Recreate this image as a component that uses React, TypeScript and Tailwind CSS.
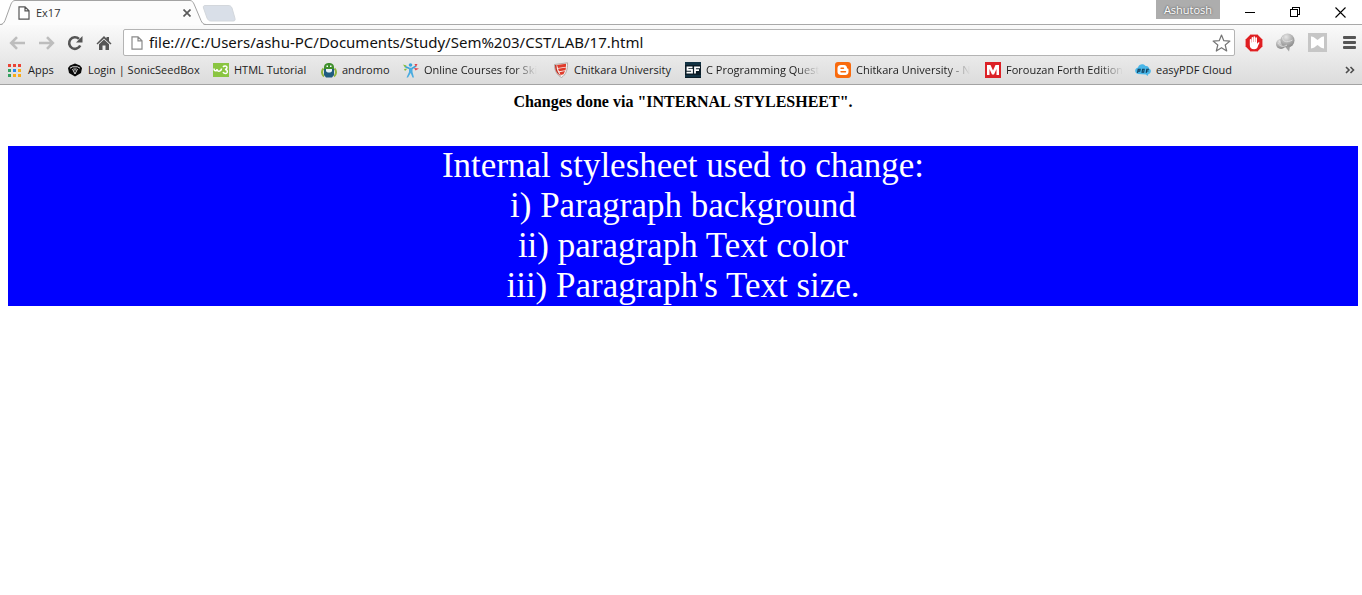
import type { ReactNode } from "react";

type Bookmark = { label: string; width: string; icon: ReactNode; faded?: boolean };

const AppsIcon = () => (
  <svg className="mr-[2px]" width="13" height="13" viewBox="0 0 13 13" shapeRendering="crispEdges">
    <path fill="#ea4335" d="M0 0h3v3H0zM5 0h3v3H5zM10 0h3v3h-3z" />
    <path fill="#34a060" d="M0 5h3v3H0zM0 10h3v3H0z" />
    <path fill="#2a86ee" d="M5 5h3v3H5z" />
    <path fill="#f9ab1a" d="M10 5h3v3h-3zM5 10h3v3H5zM10 10h3v3h-3z" />
  </svg>
);

const SonicIcon = () => (
  <svg width="16" height="16" viewBox="0 0 16 16">
    <path fill="#0a0a0a" d="M8 1.500l5 2L15 6l-1 5-6 3.500L2 11 1 6l2-2.500z" />
    <path fill="none" stroke="#dedede" strokeWidth="1" d="M3 6.200l2.500-1.400h5L13 6.200M5.500 7l2.500 5 2.500-5" />
    <path fill="#8a8a8a" d="M6 6.200h4L8 9.500z" />
  </svg>
);

const W3Icon = () => (
  <svg width="16" height="16" viewBox="0 0 16 16">
    <path fill="#8ac541" d="M0 1h16v14H0z" />
    <path fill="none" stroke="#fff" strokeWidth="1.500" d="M1 6.500c0 3 3 3 3 .5 0 3 4 3 4.500-.5M10 5c1-1.500 4-1.500 4 .5 0 1.500-2 2-2 2 3 0 3 4 .5 4-1.500 0-2-.5-2.500-1.500" />
  </svg>
);

const AndromoIcon = () => (
  <svg width="16" height="16" viewBox="0 0 16 16">
    <path fill="#3f8f2c" d="M3 5C3-.5 13-.5 13 5v2H3z" />
    <path fill="#fff" d="M5.500 3.500h1.500v1.500H5.500zM9 3.500h1.500v1.500H9z" />
    <path fill="none" stroke="#8fb53d" strokeWidth="2" d="M2.500 6.500C0 9 1 13 3 14.500M13.500 6.500c2.500 2.500 1.500 6.500-.5 8" />
    <path fill="#1f5c80" d="M3 7h10v6l-2 2.500H5L3 13z" />
    <path fill="#e8f1f5" d="M5 7h6v2c-1 2-5 2-6 0z" />
  </svg>
);

const CoursesIcon = () => (
  <svg width="16" height="16" viewBox="0 0 16 16">
    <circle cx="7.500" cy="3" r="1.800" fill="#3aa4dc" />
    <path stroke="#36a2da" strokeWidth="1.500" fill="none" d="M2 4.500l4.500 2h2.500L13 4" />
    <path fill="#4bace0" d="M6 6h3.500v4l1.500 5.500H9.500L7.700 11 5 15.500H3.500L6 10z" />
    <path fill="#84bd3f" d="M0 2.500l3.500 1-1.500 2zM1 7l3.500-.5L2 9z" />
    <path fill="#e2484d" d="M11.500 2l3 0-1.500 3zM11 6l5 .5-3.500 2z" />
  </svg>
);

const ShieldIcon = () => (
  <svg width="16" height="16" viewBox="0 0 16 16">
    <path fill="#f5efec" stroke="#a59b98" strokeWidth=".8" d="M1.500 2.500L14.500.8C15 8 12.500 13 8.500 15.500 4 13 1.500 9 1.500 2.500z" />
    <path fill="#df3b2b" d="M4 3l9-1.300v3L5 6zM5 6.800l8-1.300-.5 2.800L6 9.300zM6.500 10.200l5.500-1.200-1.500 3.200-3 .8z" />
    <path fill="#c42f22" d="M2 3h1.500c0 5 1.500 8 4.500 11C4 12 2 9 2 3z" />
  </svg>
);

const SFIcon = () => (
  <svg width="16" height="16" viewBox="0 0 16 16">
    <path fill="#0b1c27" d="M0 0h16v16H0z" />
    <path fill="#174157" d="M0 0h16v3H0zM0 13h16v2H0z" opacity=".6" />
    <path fill="none" stroke="#fff" strokeWidth="1.800" d="M7.500 5.400H2.500v2.500H7v2.700H1.500M10 11.500V5.400h5M10 8.200h4" />
  </svg>
);

const BloggerIcon = () => (
  <svg width="16" height="16" viewBox="0 0 16 16">
    <rect width="16" height="16" rx="3" fill="#f96a0d" />
    <path fill="#fff" d="M6 3h3c2 0 3 1.500 3 3 0 1 1.500 0 1.500 1.500V10c0 2-1.500 3-3 3H6c-2 0-3.500-1-3.500-3V6c0-2 1.500-3 3.500-3z" />
    <path stroke="#f96a0d" strokeWidth="1.400" strokeLinecap="round" d="M6 6.200h2.500M6 9.800h4.500" />
  </svg>
);

const MIcon = () => (
  <svg width="16" height="16" viewBox="0 0 16 16">
    <path fill="#dc2127" d="M0 0h16v16H0z" />
    <path fill="#fff" d="M2 13V3h3.500L8 8.500 10.500 3H14v10h-2.500V7L9 12.500H7L4.500 7v6z" />
  </svg>
);

const PdfIcon = () => (
  <svg width="16" height="16" viewBox="0 0 16 16">
    <path fill="#49b6e8" d="M3 12C-1 11-.5 6 3 5.500 4 1.500 9 1.500 10.500 4 13 3.500 14 5.500 14 6.500c3 1 2 5-.5 5.500l-1 2L11 12.500z" />
    <path fill="none" stroke="#123f5c" strokeWidth="1.100" d="M2.500 10.800l.7-3.500h2l-.4 1.800H3M7 10.300l.6-3h1.600l-.5 3zM11.200 10.800l.6-3.500H14M11.500 9h2" />
  </svg>
);

const bookmarks: Bookmark[] = [
  { label: "Apps", width: "w-[59px]", icon: <AppsIcon /> },
  { label: "Login | SonicSeedBox", width: "w-[146px]", icon: <SonicIcon /> },
  { label: "HTML Tutorial", width: "w-[108px]", icon: <W3Icon /> },
  { label: "andromo", width: "w-[82px]", icon: <AndromoIcon /> },
  { label: "Online Courses for Ski", width: "w-[150px]", icon: <CoursesIcon />, faded: true },
  { label: "Chitkara University", width: "w-[132px]", icon: <ShieldIcon /> },
  { label: "C Programming Quest", width: "w-[150px]", icon: <SFIcon />, faded: true },
  { label: "Chitkara University - N", width: "w-[150px]", icon: <BloggerIcon />, faded: true },
  { label: "Forouzan Forth Edition", width: "w-[150px]", icon: <MIcon />, faded: true },
  { label: "easyPDF Cloud", width: "w-[120px]", icon: <PdfIcon /> },
];

const PageIcon = ({ className }: { className: string }) => (
  <svg className={className} width="12" height="14" viewBox="0 0 12 14" fill="#fff" stroke="currentColor" strokeWidth="1.200">
    <path d="M1 .8h6l4 4v8.400H1zM7 .8v4h4" />
  </svg>
);

const Arrow = ({ className = "" }: { className?: string }) => (
  <svg className={className} width="16" height="14" viewBox="0 0 16 14" fill="none" stroke="#bdbdbd" strokeWidth="2.600">
    <path d="M8 1.200L2.200 7 8 12.800M2.500 7H16" />
  </svg>
);

const toolButton = "flex shrink-0 items-center justify-center";

function TabStrip() {
  return (
    <div className="flex h-[25px] items-start bg-white shadow-[inset_0_-1px_0_#a9a9a9]">
      <div className="relative flex h-[25px] w-[206px] shrink-0 items-center pl-[18px] pr-[14px]">
        <svg className="absolute inset-0" width="206" height="25" viewBox="0 0 206 25" fill="none">
          <path fill="#fcfcfc" d="M0 25c3 0 4-2 5-4L11 4c1-2 2-3.500 4-3.500h175c2 0 3 1.500 4 3.500l7 17c1 2 2 4 5 4z" />
          <path stroke="#a3a3a3" d="M0 24.500c3 0 4-2 5-4L11 4c1-2 2-3.500 4-3.500h175c2 0 3 1.500 4 3.500l7 16.500c1 2 2 4 5 4" />
        </svg>
        <PageIcon className="relative mr-[6px] text-[#555]" />
        <span className="relative flex-1 text-[11px] leading-4 text-[#333]">Ex17</span>
        <button aria-label="Close tab" className="relative flex size-[10px] items-center justify-center">
          <svg width="8" height="8" viewBox="0 0 8 8" stroke="#5a5a5a" strokeWidth="1.700">
            <path d="M.5.5l7 7M7.500.5l-7 7" />
          </svg>
        </button>
      </div>
      <button aria-label="New tab" className="-ml-1 mt-[5px]">
        <svg width="34" height="17" viewBox="0 0 34 17">
          <path fill="#d9dfe8" stroke="#d3d7dc" d="M3 .5h23c2 0 3 .5 4 2.500l3 10.500c.5 2-.5 2.500-2 2.500H9c-2 0-3-1-4-3L1.500 3C1 1.500 1.500.5 3 .5z" />
        </svg>
      </button>
      <div className="flex-1" />
      <button className="h-[19px] w-[64px] bg-[#adadad] text-[11px] leading-[18px] text-white [text-shadow:0_0_2px_#333]">
        Ashutosh
      </button>
      <div className="ml-[7px] flex h-[24px]">
        <button aria-label="Minimize" className="flex w-[46px] items-center justify-center">
          <svg width="10" height="10" viewBox="0 0 10 10" shapeRendering="crispEdges"><path d="M0 5h10v1H0z" /></svg>
        </button>
        <button aria-label="Restore" className="flex w-[44px] items-center justify-center">
          <svg width="10" height="10" viewBox="0 0 10 10" fill="none" stroke="#000" shapeRendering="crispEdges">
            <path d="M.5 2.500h7v7h-7zM2.500 2.500v-2h7v7h-2" />
          </svg>
        </button>
        <button aria-label="Close" className="flex w-[45px] items-center justify-center pl-[2px]">
          <svg width="11" height="11" viewBox="0 0 11 11" stroke="#000" strokeWidth="1.100"><path d="M.5.5l10 10M10.500.5l-10 10" /></svg>
        </button>
      </div>
    </div>
  );
}

function Toolbar() {
  return (
    <div className="flex h-[35px] items-center pl-[9px] pr-[5px]">
      <button aria-label="Back" className={toolButton + " w-4"}><Arrow /></button>
      <button aria-label="Forward" className={toolButton + " ml-[14px] w-4"}><Arrow className="rotate-180" /></button>
      <button aria-label="Reload" className={toolButton + " ml-[12px] w-4"}>
        <svg width="16" height="16" viewBox="0 0 16 16">
          <path fill="none" stroke="#555" strokeWidth="2.600" d="M13.200 10.500A5.800 5.800 0 1 1 12 3.900" />
          <path fill="#555" d="M15.500 1v6.500H9z" />
        </svg>
      </button>
      <button aria-label="Home" className={toolButton + " ml-[13px] w-4"}>
        <svg width="16" height="16" viewBox="0 0 16 16" fill="#555">
          <path d="M8 1l2.500 2.500V2H13v4l2.500 2.500-1 1L8 3.400 1.500 9.500l-1-1z" />
          <path d="M3 9.300L8 4.600l5 4.700V15H9.500v-4.500h-3V15H3z" />
        </svg>
      </button>
      <div className="ml-[11px] flex h-[27px] min-w-0 flex-1 items-center rounded-[2px] border border-[#b4b4b4] bg-white pl-[7px] pr-[3px]">
        <PageIcon className="shrink-0 text-[#8a8a8a]" />
        <input
          aria-label="Address"
          className="ml-[6px] min-w-0 flex-1 bg-transparent pb-[2px] font-['Noto_Sans',sans-serif] text-[15px] leading-5 text-[#111] outline-none"
          defaultValue="file:///C:/Users/ashu-PC/Documents/Study/Sem%203/CST/LAB/17.html"
        />
        <button aria-label="Bookmark this page">
          <svg width="19" height="18" viewBox="0 0 19 18" fill="#fff" stroke="#757575" strokeWidth="1.200" strokeLinejoin="round">
            <path d="M9.500 1l2.300 5.700 6.100.4-4.700 3.900 1.500 6-5.200-3.300L4.300 17l1.500-6L1.100 7.100l6.100-.4z" />
          </svg>
        </button>
      </div>
      <button aria-label="Ad blocker" className={toolButton + " ml-[9px] w-[19px]"}>
        <svg width="18" height="18" viewBox="0 0 18 18">
          <path fill="#df1f22" stroke="#eda0a0" strokeWidth=".8" d="M5.500.5h7l5 5v7l-5 5h-7l-5-5v-7z" />
          <path fill="#fff" d="M4.800 5.800c0-1.100 1.500-1.100 1.500 0V8.500h.3V3.900c0-1.100 1.600-1.100 1.600 0V8h.3V3c0-1.100 1.600-1.100 1.600 0v5h.3V4c0-1.100 1.600-1.100 1.600 0v6c.8-1.500 1.300-2.200 2.200-1.700.8.500-.7 2-1.200 3.700-.6 2.200-1.700 3.200-3.900 3.200-2.700 0-4.300-1.200-4.300-4.200z" />
        </svg>
      </button>
      <button aria-label="Download manager" className={toolButton + " ml-[12px] w-[20px]"}>
        <svg width="20" height="19" viewBox="0 0 20 19">
          <defs>
            <radialGradient id="ball" cx=".4" cy=".25" r=".8">
              <stop stopColor="#e6e6e6" /><stop offset="1" stopColor="#858585" />
            </radialGradient>
          </defs>
          <circle cx="6" cy="11" r="5" fill="url(#ball)" />
          <circle cx="12.500" cy="7.500" r="7" fill="url(#ball)" />
          <path fill="#a2a2a2" d="M10 13.500l4 5 1-5z" />
          <path fill="none" stroke="#dcdcdc" strokeWidth="1" d="M7.500 4c0 5 4 6 10 3M3 10c2 4 6 4 9 2" />
        </svg>
      </button>
      <button aria-label="Mail extension" className={toolButton + " ml-[13px] w-[19px]"}>
        <svg width="19" height="19" viewBox="0 0 19 19">
          <path fill="#c6c6c6" d="M0 0h19v19H0z" />
          <path fill="#fff" d="M3 3.500c3-.5 4.500 2.500 6.500 3.500C11.500 6 13 3 16 3.500v12c-3 0-4.500-2.500-6.500-3.500-2 1-3.500 3.500-6.500 3.500z" />
        </svg>
      </button>
      <button aria-label="Menu" className={toolButton + " ml-[15px] w-[15px]"}>
        <svg width="13" height="13" viewBox="0 0 13 13" fill="#555">
          <rect width="13" height="3" rx="1" /><rect y="5" width="13" height="3" rx="1" /><rect y="10" width="13" height="3" rx="1" />
        </svg>
      </button>
    </div>
  );
}

function BookmarksBar() {
  return (
    <nav aria-label="Bookmarks" className="flex h-[24px] items-start pl-2 pr-[7px] pt-[2px]">
      {bookmarks.map(({ label, width, icon, faded }) => (
        <a key={label} href="#" className={"flex h-4 shrink-0 items-center text-[11px] leading-4 text-[#1c1c1c] " + width}>
          <span className="mr-[5px] shrink-0">{icon}</span>
          <span
            className={
              faded
                ? "whitespace-nowrap [mask-image:linear-gradient(to_right,#000_80%,transparent)]"
                : "whitespace-nowrap"
            }
          >
            {label}
          </span>
        </a>
      ))}
      <button aria-label="More bookmarks" className="ml-auto flex h-4 items-center">
        <svg width="10" height="8" viewBox="0 0 10 8" fill="none" stroke="#4c4c4c" strokeWidth="1.600">
          <path d="M1 1l3 3-3 3M5.500 1l3 3-3 3" />
        </svg>
      </button>
    </nav>
  );
}

export default function App() {
  return (
    <div className="min-h-screen bg-white">
      <header className="font-['Open_Sans',sans-serif]">
        <TabStrip />
        <div className="border-b border-[#a3a3a3] bg-linear-to-b from-[#fafafa] to-[#dcdcdc]">
          <Toolbar />
          <BookmarksBar />
        </div>
      </header>
      <main className="pl-2 pr-1 pt-2 text-center font-['Liberation_Serif',serif]">
        <h1 className="text-[16px] font-bold leading-[18px] text-black">Changes done via "INTERNAL STYLESHEET".</h1>
        <p className="mt-[35px] bg-[#0000ff] text-[35px] leading-10 text-white">
          Internal stylesheet used to change:
          <br />
          i) Paragraph background
          <br />
          ii) paragraph Text color
          <br />
          iii) Paragraph's Text size.
        </p>
      </main>
    </div>
  );
}
